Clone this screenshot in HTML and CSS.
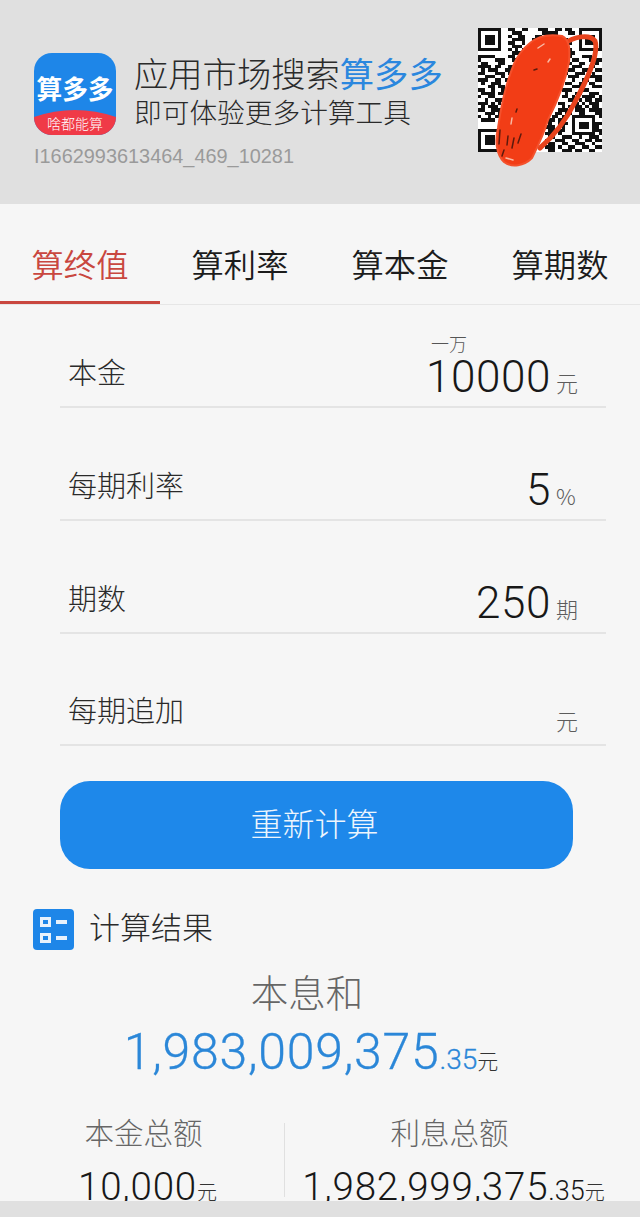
FILE: index.html
```html
<!DOCTYPE html>
<html lang="zh-CN">
<head>
<meta charset="utf-8">
<title>算多多</title>
<link rel="stylesheet" href="styles.css">
</head>
<body>
<div class="screen">
  <header class="promo">
    <div class="promo-left">
      <div class="promo-main">
        <svg class="app-icon" viewBox="0 0 82 82" aria-hidden="true">
          <defs><clipPath id="icon-clip"><rect width="82" height="82" rx="18"/></clipPath></defs>
          <g clip-path="url(#icon-clip)">
            <rect width="82" height="82" fill="#1e86e8"/>
            <path d="M0 64Q41 50 82 64V82H0Z" fill="#f03a47"/>
            <text class="icon-name" x="41" y="46" text-anchor="middle" textLength="77" lengthAdjust="spacingAndGlyphs">算多多</text>
            <text class="icon-slogan" x="41" y="76" text-anchor="middle">啥都能算</text>
          </g>
        </svg>
        <div class="promo-copy">
          <p class="promo-title">应用市场搜索<span class="promo-brand">算多多</span></p>
          <p class="promo-sub">即可体验更多计算工具</p>
        </div>
      </div>
      <p class="promo-id">I1662993613464_469_10281</p>
    </div>
    <div class="qr">
      <svg class="qr-code" viewBox="0 0 37 37" shape-rendering="crispEdges" aria-hidden="true">
        <rect width="37" height="37" fill="#fff"/>
        <path fill="#111" fill-rule="evenodd" d="M0 0h7v7H0zM1 1v5h5V1zM2 2h3v3H2zM30 0h7v7h-7zM31 1v5h5V1zM32 2h3v3h-3zM0 30h7v7H0zM1 31v5h5v-5zM2 32h3v3H2z"/>
        <path stroke="#111" stroke-width="1" fill="none" d="M9 .5h2M13 .5h2M18 .5h3M23 .5h2M26 .5h2M10 1.5h3M19 1.5h5M27 1.5h2M9 2.5h1M12 2.5h2M17 2.5h2M22 2.5h3M10 3.5h4M16 3.5h2M20 3.5h2M24 3.5h3M9 4.5h2M13 4.5h1M18 4.5h4M26 4.5h2M10 5.5h3M16 5.5h1M21 5.5h3M9 6.5h1M11 6.5h1M13 6.5h1M15 6.5h1M17 6.5h1M19 6.5h1M21 6.5h1M23 6.5h1M25 6.5h1M27 6.5h1M10 7.5h3M16 7.5h2M22 7.5h2M27 7.5h2M0 8.5h5M9 8.5h2M12 8.5h2M18 8.5h2M26 8.5h2M31 8.5h3M0 9.5h1M5 9.5h3M10 9.5h3M20 9.5h3M28 9.5h2M33 9.5h4M1 10.5h2M6 10.5h2M11 10.5h2M27 10.5h1M30 10.5h2M35 10.5h1M0 11.5h4M5 11.5h2M9 11.5h3M28 11.5h3M33 11.5h2M1 12.5h1M3 12.5h3M8 12.5h2M27 12.5h2M31 12.5h2M35 12.5h2M0 13.5h2M5 13.5h3M9 13.5h2M26 13.5h1M29 13.5h3M34 13.5h1M2 14.5h3M7 14.5h1M27 14.5h3M33 14.5h4M0 15.5h3M5 15.5h2M8 15.5h1M28 15.5h1M31 15.5h2M35 15.5h2M1 16.5h1M4 16.5h3M26 16.5h2M30 16.5h2M33 16.5h2M3 17.5h2M6 17.5h2M28 17.5h3M34 17.5h3M0 18.5h2M4 18.5h1M7 18.5h1M25 18.5h3M31 18.5h2M1 19.5h4M6 19.5h2M26 19.5h1M29 19.5h2M33 19.5h3M0 20.5h1M3 20.5h2M25 20.5h2M28 20.5h1M31 20.5h4M36 20.5h1M2 21.5h1M5 21.5h3M27 21.5h2M30 21.5h1M32 21.5h2M35 21.5h2M0 22.5h3M4 22.5h1M6 22.5h1M24 22.5h2M28 22.5h2M31 22.5h1M33 22.5h3M1 23.5h1M3 23.5h3M25 23.5h1M27 23.5h1M29 23.5h2M32 23.5h1M34 23.5h2M0 24.5h2M4 24.5h3M24 24.5h3M29 24.5h3M33 24.5h4M2 25.5h3M6 25.5h1M23 25.5h2M26 25.5h2M30 25.5h2M35 25.5h2M0 26.5h1M3 26.5h1M5 26.5h2M22 26.5h2M25 26.5h1M28 26.5h7M36 26.5h1M1 27.5h4M21 27.5h2M24 27.5h2M28 27.5h1M34 27.5h1M21 28.5h1M24 28.5h3M28 28.5h1M30 28.5h3M34 28.5h3M20 29.5h3M25 29.5h1M28 29.5h1M30 29.5h3M34 29.5h2M21 30.5h2M24 30.5h2M28 30.5h1M34 30.5h3M9 31.5h1M20 31.5h2M24 31.5h1M28 31.5h7M36 31.5h1M21 32.5h2M25 32.5h3M30 32.5h1M33 32.5h3M20 33.5h1M23 33.5h3M28 33.5h2M32 33.5h2M35 33.5h2M21 34.5h2M25 34.5h2M29 34.5h3M34 34.5h1M20 35.5h3M24 35.5h1M27 35.5h2M31 35.5h2M35 35.5h2M21 36.5h2M25 36.5h3M29 36.5h2M33 36.5h2"/>
      </svg>
      <svg class="qr-scribble" viewBox="0 0 124 144" aria-hidden="true">
        <path d="M86 16C96 8 112 6 117 13C121 24 110 50 97 74C88 92 78 106 62 120" fill="none" stroke="#e8431d" stroke-width="5" stroke-linecap="round"/>
        <path d="M52 15C60 8 72 6 84 8C92 12 92 22 91 34C88 50 80 72 70 92C66 106 60 118 54 130C46 138 34 140 26 134C18 126 17 112 20 100C23 78 28 55 36 36C40 26 46 20 52 15Z" fill="#f23d16" stroke="#f4512c" stroke-width="2"/>
        <path d="M22 102l-1 14M30 108l-1 9M36 110l-2 10M26 122l-2 6M43 106l-3 9M38 84l1-3M56 42l3-1" stroke="#5c1a0d" stroke-width="1.5" stroke-linecap="round"/>
        <path d="M34 90l-1 6M60 20l6-4M28 130l7 2M70 34l2-3" stroke="#f8b9a4" stroke-width="1.5" stroke-linecap="round"/>
      </svg>
    </div>
  </header>

  <main class="content">
    <nav class="tabs">
      <a class="tab tab-active">算终值</a>
      <a class="tab">算利率</a>
      <a class="tab">算本金</a>
      <a class="tab">算期数</a>
    </nav>

    <section class="form">
      <div class="field">
        <span class="field-label">本金</span>
        <span class="field-value">
          <span class="field-hint">一万</span>
          <span class="field-number">10000</span>
        </span>
        <span class="field-unit">元</span>
      </div>
      <div class="field">
        <span class="field-label">每期利率</span>
        <span class="field-value"><span class="field-number">5</span></span>
        <span class="field-unit">%</span>
      </div>
      <div class="field">
        <span class="field-label">期数</span>
        <span class="field-value"><span class="field-number">250</span></span>
        <span class="field-unit">期</span>
      </div>
      <div class="field">
        <span class="field-label">每期追加</span>
        <span class="field-value"></span>
        <span class="field-unit">元</span>
      </div>
    </section>

    <button class="recalc" type="button">重新计算</button>

    <section class="results">
      <h2 class="results-title">
        <svg class="results-icon" viewBox="0 0 41 41" aria-hidden="true">
          <rect width="41" height="41" rx="4" fill="#1e86e8"/>
          <path d="M8.5 9.5h8v7h-8zM8.5 25.5h8v7h-8z" fill="none" stroke="#e8f2fc" stroke-width="3"/>
          <path d="M23 11h11v4H23zM23 27h11v4H23z" fill="#e8f2fc"/>
        </svg>
        <span>计算结果</span>
      </h2>
      <p class="total-label">本息和</p>
      <p class="total-value">1,983,009,375<span class="total-cents">.35</span><span class="total-unit">元</span></p>
      <div class="breakdown">
        <div class="breakdown-col breakdown-left">
          <p class="breakdown-label">本金总额</p>
          <p class="breakdown-value">10,000<span class="breakdown-unit">元</span></p>
        </div>
        <div class="breakdown-col breakdown-right">
          <p class="breakdown-label">利息总额</p>
          <p class="breakdown-value">1,982,999,375<span class="breakdown-cents">.35</span><span class="breakdown-unit">元</span></p>
        </div>
      </div>
    </section>
  </main>

  <div class="foot-bar"></div>
</div>
</body>
</html>
```
FILE: styles.css
```css
* { box-sizing: border-box; }
html, body { margin: 0; padding: 0; }
body {
  width: 640px;
  height: 1217px;
  overflow: hidden;
  background: #f6f6f6;
  font-family: "Noto Sans CJK SC", "Noto Sans", sans-serif;
  font-weight: 300;
  color: #333;
}
p, h2 { margin: 0; font-weight: inherit; }

.screen {
  display: flex;
  flex-direction: column;
  height: 1217px;
}

/* download banner */
.promo {
  flex: none;
  height: 204px;
  background: #e0e0e0;
  display: flex;
  justify-content: space-between;
  padding: 28px 38px 0 34px;
}
.promo-left { padding-top: 25px; }
.promo-main { display: flex; gap: 18px; }
.app-icon { width: 82px; height: 82px; flex: none; }
.icon-name { font-size: 26px; font-weight: 700; fill: #fff; }
.icon-slogan { font-size: 14px; fill: #fff; }
.promo-title {
  font-size: 34.3px;
  line-height: 41px;
  margin-top: -1px;
  color: #2a2a2a;
}
.promo-brand { color: #2b87de; font-weight: 400; }
.promo-sub {
  font-size: 27.7px;
  line-height: 34px;
  margin-top: 1px;
  color: #2a2a2a;
}
.promo-id {
  margin-top: 9px;
  font-family: "Liberation Sans", sans-serif;
  font-size: 19.9px;
  line-height: 24px;
  color: #9a9a9a;
}
.qr { position: relative; width: 124px; height: 124px; }
.qr-code { display: block; width: 124px; height: 124px; }
.qr-scribble {
  position: absolute;
  left: 0;
  top: 0;
  width: 124px;
  height: 144px;
}

/* main column */
.content {
  flex: 1;
  min-height: 0;
  overflow: hidden;
}

.tabs {
  display: grid;
  grid-template-columns: repeat(4, 160px);
  height: 101px;
  border-bottom: 1px solid #e6e6e6;
}
.tab {
  font-size: 32.3px;
  line-height: 60px;
  padding-top: 29px;
  text-align: center;
  color: #1c1c1c;
  font-weight: 350;
}
.tab-active {
  color: #c9473f;
  height: 100px;
  border-bottom: 3px solid #c9473f;
}

.form { padding: 0 34px 0 60px; }
.field {
  height: 113px;
  display: flex;
  align-items: flex-end;
  border-bottom: 2px solid #e4e4e4;
  padding: 0 28px 0 8px;
}
.field:first-child { height: 103px; }
.field:last-child { height: 112px; }
.field-label {
  font-size: 29px;
  line-height: 42px;
  padding-bottom: 14px;
  color: #2a2a2a;
}
.field-value {
  flex: 1;
  display: flex;
  flex-direction: column;
  align-items: flex-end;
  padding-right: 5px;
}
.field-hint {
  font-size: 18px;
  line-height: 18px;
  color: #555;
  align-self: flex-end;
  margin-right: 84px;
  margin-bottom: 3px;
}
.field-number {
  font-family: Roboto, "Liberation Sans", sans-serif;
  font-size: 44px;
  font-weight: 300;
  letter-spacing: 0.6px;
  line-height: 44px;
  padding-bottom: 7px;
  color: #181818;
}
.field-unit {
  width: 22px;
  font-size: 22px;
  line-height: 28px;
  padding-bottom: 10px;
  color: #5c5c5c;
}

.recalc {
  display: block;
  width: 513px;
  height: 88px;
  margin: 35px 0 0 60px;
  padding: 0 4px 6px 0;
  border: 0;
  border-radius: 30px;
  background: #1e88ea;
  color: #edf5fd;
  font: 300 32px "Noto Sans CJK SC", sans-serif;
}

.results { padding-top: 40px; }
.results-title {
  display: flex;
  align-items: center;
  gap: 15px;
  padding-left: 33px;
  height: 40px;
  font-size: 31px;
  color: #2a2a2a;
}
.results-title span { margin-top: -7px; }
.results-icon { width: 41px; height: 41px; flex: none; }
.total-label {
  margin-top: 15px;
  padding-right: 26px;
  text-align: center;
  font-size: 37.5px;
  line-height: 54px;
  color: #666;
}
.total-value {
  margin-top: 4px;
  padding-right: 18px;
  font-family: Roboto, "Liberation Sans", sans-serif;
  font-weight: 300;
  text-align: center;
  font-size: 50px;
  letter-spacing: 0.75px;
  line-height: 60px;
  color: #2b87d8;
  white-space: nowrap;
  -webkit-text-stroke: 0.3px #2b87d8;
}
.total-cents { font-size: 28px; letter-spacing: 0; }
.total-unit {
  font-family: "Noto Sans CJK SC", sans-serif;
  font-size: 21px;
  letter-spacing: 0;
  color: #333;
  -webkit-text-stroke: 0;
}

.breakdown {
  display: grid;
  grid-template-columns: 285px 355px;
  margin-top: 33px;
}
.breakdown-col { text-align: center; height: 74px; white-space: nowrap; }
.breakdown-left { border-right: 1px solid #e0e0e0; padding-left: 11px; }
.breakdown-right { padding-left: 6px; padding-right: 24px; }
.breakdown-label {
  font-size: 29.5px;
  line-height: 42px;
  color: #666;
  margin-top: -13px;
  padding-right: 8px;
}
.breakdown-value {
  font-family: Roboto, "Liberation Sans", sans-serif;
  font-weight: 300;
  font-size: 38.5px;
  letter-spacing: 0.8px;
  line-height: 46px;
  margin-top: 12px;
  color: #181818;
}
.breakdown-cents { font-size: 27px; letter-spacing: 0; }
.breakdown-unit {
  font-family: "Noto Sans CJK SC", sans-serif;
  font-size: 20px;
  letter-spacing: 0;
  color: #333;
}

.foot-bar {
  flex: none;
  height: 16px;
  background: #e0e0e0;
}
```
